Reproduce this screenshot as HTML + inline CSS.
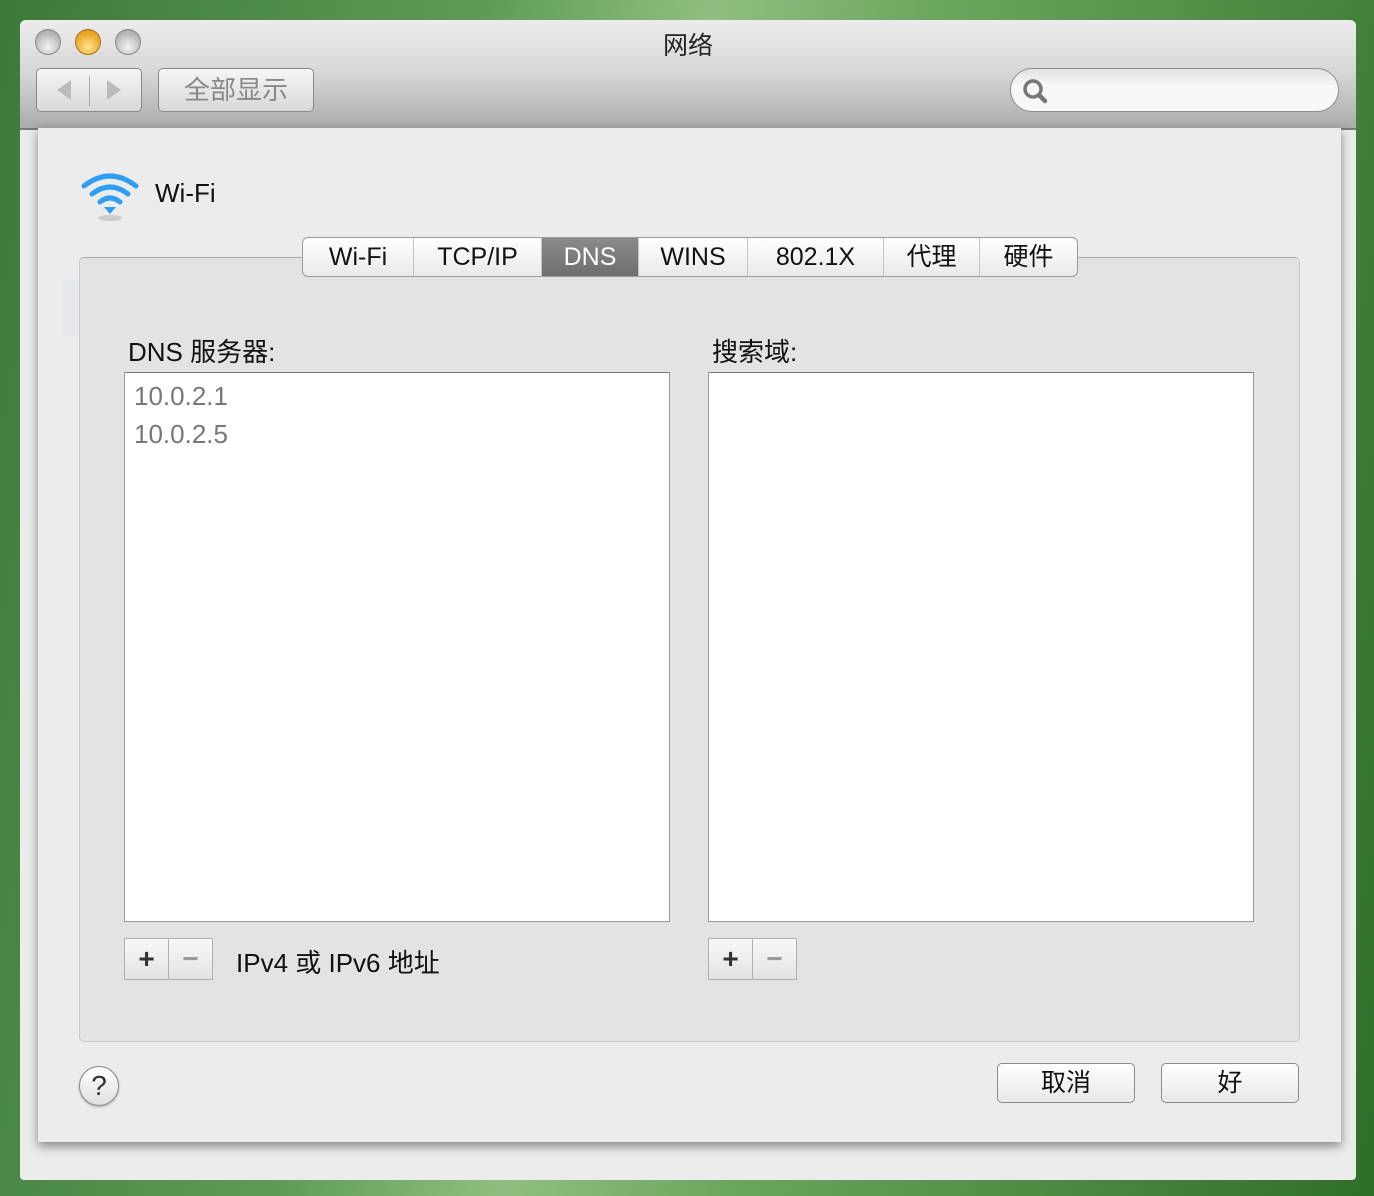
<!DOCTYPE html>
<html><head><meta charset="utf-8"><style>
*{margin:0;padding:0;box-sizing:border-box}
body{width:1374px;height:1196px;overflow:hidden;position:relative;font-family:"Liberation Sans","Noto Sans CJK SC",sans-serif;background:linear-gradient(100deg,#3d7a3a 0%,#5c9a55 30%,#8fbf80 45%,#6aa55c 60%,#2f6e28 100%)}
.abs{position:absolute}
.win{left:20px;top:20px;width:1336px;height:1160px;background:#ececec;border-radius:6px 6px 4px 4px;overflow:hidden}
.tb{left:0;top:0;width:1336px;height:110px;background:linear-gradient(#ececec,#d6d6d6 50%,#ababab);border-bottom:2px solid #7a7a7a}
.light{width:26px;height:26px;border-radius:50%;top:9px;border:1px solid #8a8a8a;background:radial-gradient(circle at 50% 70%,#f4f4f4,#aaa 80%)}
.btn{border:1px solid #8a8a8a;border-radius:5px;background:linear-gradient(#f6f6f6,#d8d8d8)}
.sheet{left:38px;top:128px;width:1303px;height:1014px;background:#ececec;box-shadow:0 4px 10px rgba(0,0,0,.45)}
.tabs{left:302px;top:237px;height:40px;display:flex;border:1px solid #9a9a9a;border-radius:6px;background:linear-gradient(#fff,#e9e9e9);overflow:hidden;font-size:25px}
.tabs div{text-align:center;line-height:38px;border-right:1px solid #c4c4c4;color:#111}
.tabs div:last-child{border:none}
.list{background:#fff;border:1px solid #9b9b9b;border-top-color:#777}
.pm{border:1px solid #b0b0b0;background:linear-gradient(#f8f8f8,#e3e3e3);width:45px;height:42px;text-align:center;line-height:40px;font-size:28px;font-weight:bold}
</style></head><body>
<div class="abs win">
 <div class="abs tb">
  <div class="abs light" style="left:15px"></div>
  <div class="abs light" style="left:55px;background:radial-gradient(circle at 50% 70%,#fde38a,#e59a13 80%);border-color:#a8731c"></div>
  <div class="abs light" style="left:95px"></div>
  <div class="abs" style="left:0;width:1336px;top:6px;text-align:center;font-size:25px;color:#222">网络</div>
  <div class="abs btn" style="left:16px;top:48px;width:106px;height:44px"></div>
  <div class="abs" style="left:37px;top:60px;width:0;height:0;border-top:10px solid transparent;border-bottom:10px solid transparent;border-right:14px solid #bbb"></div>
  <div class="abs" style="left:69px;top:56px;width:1px;height:30px;background:#aaa"></div>
  <div class="abs" style="left:87px;top:60px;width:0;height:0;border-top:10px solid transparent;border-bottom:10px solid transparent;border-left:14px solid #bbb"></div>
  <div class="abs btn" style="left:138px;top:48px;width:156px;height:44px;text-align:center;line-height:42px;font-size:26px;color:#888">全部显示</div>
  <div class="abs" style="left:990px;top:48px;width:329px;height:44px;border:1px solid #8d8d8d;border-radius:22px;background:linear-gradient(#e2e2e2,#f8f8f8 40%,#f8f8f8)"></div>
  <svg class="abs" style="left:1000px;top:56px" width="30" height="30"><circle cx="13" cy="13" r="8" fill="none" stroke="#777" stroke-width="3.5"/><line x1="19" y1="19" x2="25" y2="25" stroke="#777" stroke-width="4.5" stroke-linecap="round"/></svg>
 </div>
</div>
<div class="abs sheet"></div>
<div class="abs" style="left:62px;top:280px;width:336px;height:56px;background:#e6e8ec"></div>
<svg class="abs" style="left:78px;top:170px" width="64" height="56">
 <g fill="none" stroke="#2d9df5" stroke-width="5" stroke-linecap="round">
 <path d="M6 16 Q32 -4 58 16"/><path d="M14 24 Q32 10 50 24"/><path d="M22 32 Q32 24 42 32"/></g>
 <path d="M26 37 L38 37 L32 44 Z" fill="#2d9df5"/>
 <ellipse cx="32" cy="48" rx="12" ry="3" fill="#ccc"/>
</svg>
<div class="abs" style="left:155px;top:178px;font-size:26px;color:#111">Wi-Fi</div>
<div class="abs" style="left:79px;top:257px;width:1221px;height:785px;background:#e3e3e3;border:1px solid #c9c9c9;border-top-color:#aaa;border-radius:5px"></div>
<div class="abs tabs"><div style="width:111px">Wi-Fi</div><div style="width:128px">TCP/IP</div><div style="width:97px;background:linear-gradient(#8a8a8a,#6f6f6f);color:#fff">DNS</div><div style="width:109px">WINS</div><div style="width:136px">802.1X</div><div style="width:96px">代理</div><div style="width:97px">硬件</div></div>
<div class="abs" style="left:128px;top:332px;font-size:26px;color:#111">DNS 服务器:</div>
<div class="abs" style="left:712px;top:332px;font-size:26px;color:#111">搜索域:</div>
<div class="abs list" style="left:124px;top:372px;width:546px;height:550px">
 <div style="padding:4px 9px;font-size:26px;color:#777;line-height:38px">10.0.2.1<br>10.0.2.5</div>
</div>
<div class="abs list" style="left:708px;top:372px;width:546px;height:550px"></div>
<div class="abs pm" style="left:124px;top:938px;color:#333">+</div>
<div class="abs pm" style="left:168px;top:938px;color:#999">−</div>
<div class="abs" style="left:236px;top:943px;font-size:26px;color:#111">IPv4 或 IPv6 地址</div>
<div class="abs pm" style="left:708px;top:938px;color:#333">+</div>
<div class="abs pm" style="left:752px;top:938px;color:#999">−</div>
<div class="abs" style="left:79px;top:1066px;width:40px;height:40px;border-radius:50%;border:1px solid #888;background:linear-gradient(#fff,#e0e0e0);text-align:center;line-height:38px;font-size:28px;color:#333;box-shadow:0 1px 2px rgba(0,0,0,.3)">?</div>
<div class="abs btn" style="left:997px;top:1063px;width:138px;height:40px;text-align:center;line-height:38px;font-size:25px;color:#111;background:linear-gradient(#fff,#e8e8e8)">取消</div>
<div class="abs btn" style="left:1161px;top:1063px;width:138px;height:40px;text-align:center;line-height:38px;font-size:25px;color:#111;background:linear-gradient(#fff,#e8e8e8)">好</div>
</body></html>
